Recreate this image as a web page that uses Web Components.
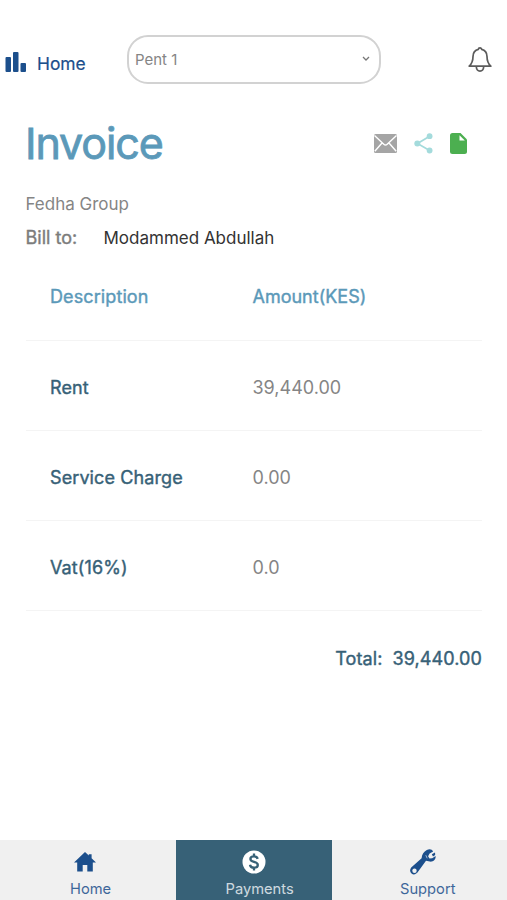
<!DOCTYPE html>
<html lang="en">
<head>
    <meta charset="UTF-8">
    <meta name="viewport" content="width=device-width, initial-scale=1.0">
    <title>Invoice</title>
    <style>
        :root {
            --Navy: #1c4f8c;
            --Blue: #5b99b9;
            --Teal: #376177;
            --Gray: #858585;
        }
        body {
            margin: 0;
            background: #fff;
            font-family: 'Inter', 'Liberation Sans', sans-serif;
        }
    </style>
</head>
<body>
    <invoice-app></invoice-app>

    <script>
        const icons = {
            bars: `<svg width="20" height="20" viewBox="0 0 20 20" fill="currentColor"><rect x="-.5" y="5" width="5.5" height="15" rx="1"/><rect x="7" y="0" width="5.5" height="20" rx="1"/><rect x="14.5" y="11" width="5.5" height="9" rx="1"/></svg>`,
            chevron: `<svg width="8" height="6" viewBox="0 0 8 6" fill="none" stroke="#777" stroke-width="1.3"><path d="M1 1l3 3 3-3"/></svg>`,
            bell: `<svg width="24" height="27" viewBox="0 0 24 27" fill="none" stroke="#5c5c5c" stroke-width="1.7" stroke-linejoin="round"><path d="M12 1.9C11 1.9 10.4 2.5 10.4 3.3C7 4.1 5 6.7 5 10.4C5 15.2 4 17.4 1.2 20.2H22.8C20 17.4 19 15.2 19 10.4C19 6.7 17 4.1 13.6 3.3C13.6 2.5 13 1.9 12 1.9Z"/><path d="M8.3 20.8C8.5 23.6 9.9 25.1 12 25.1S15.5 23.6 15.7 20.8"/></svg>`,
            mail: `<svg width="23" height="19" viewBox="0 0 23 19"><rect width="23" height="19" rx="1.5" fill="#a5a5a5"/><path d="M.5 1.5L9.8 10.2Q11.5 11.8 13.2 10.2L22.5 1.5M.8 17.2L8 9M22.2 17.2L15 9" fill="none" stroke="#fff" stroke-width="1.4"/></svg>`,
            share: `<svg width="19" height="21" viewBox="0 0 19 21" fill="#a4dbdc"><path d="M15.6 3.2L3.5 10.5L15.6 17.6" fill="none" stroke="#a4dbdc" stroke-width="1.7"/><circle cx="3.3" cy="10.5" r="3"/><circle cx="15.6" cy="3.2" r="2.9"/><circle cx="15.6" cy="17.5" r="2.9"/></svg>`,
            file: `<svg width="17" height="21" viewBox="0 0 17 21"><path d="M2.5 0H10.5L17 6.4V18.5Q17 21 14.5 21H2.5Q0 21 0 18.5V2.5Q0 0 2.5 0Z" fill="#4caf50"/><path d="M9.5 2.2V7.4H14.8Z" fill="#fff"/></svg>`,
            home: `<svg width="22" height="20" viewBox="0 0 22 20" fill="currentColor"><path d="M11 0L14.8 3.6V2.2H17.6V6.3L22 10.6H18.8V19.5H13.3V13H8.7V19.5H3.2V10.6H0Z"/></svg>`,
            dollar: `<svg width="24" height="24" viewBox="0 0 24 24" fill="none"><circle cx="12" cy="12" r="11.5" fill="#fff"/><path d="M15.7 8.9C15.2 7.3 13.9 6.4 12 6.4C9.8 6.4 8.4 7.4 8.4 9C8.4 10.7 9.7 11.3 12 11.9C14.6 12.6 15.8 13.3 15.8 15C15.8 16.7 14.2 17.7 12 17.7C9.8 17.7 8.3 16.7 8 14.8M12 3.6V6.6M12 17.5V20.5" stroke="#376177" stroke-width="2.3"/></svg>`,
            wrench: `<svg width="26" height="26" viewBox="0 0 26 26"><path d="M16.8 1C19.6-.4 22 .2 23.1 2.5L19.6 4.4L18.1 7.3L19.5 9.5L22.2 9.2L25.6 7.1C26 10.8 23.4 12.9 19.8 12.6L16 11.7L8.2 22.6C6.6 25.2 3.8 26.3 1.8 24.8C-.3 23.2-.4 20.7 1.2 18.6L11.6 9.2C11.9 5.4 13.8 2.5 16.8 1Z" fill="currentColor"/><path d="M21.8 5.2L25 3.6L25.2 6L23 7.5Z" fill="currentColor"/><circle cx="4.5" cy="21.8" r="2.2" fill="#f0f0f0"/><path d="M15.8 6.2L17.2 9.3" stroke="#9db3cf" stroke-width="1"/></svg>`
        };

        class AppIcon extends HTMLElement {
            constructor() {
                super();
                this.attachShadow({ mode: 'open' });
            }

            connectedCallback() {
                this.shadowRoot.innerHTML = `
                <style>
                    :host { display: block; flex: none; }
                    svg { display: block; overflow: visible; }
                </style>
                ${icons[this.getAttribute('name')]}
                `;
            }
        }

        class AppHeader extends HTMLElement {
            constructor() {
                super();
                this.attachShadow({ mode: 'open' });
            }

            connectedCallback() {
                this.shadowRoot.innerHTML = `
                <style>
                    :host {
                        display: grid;
                        grid-template-columns: 121px 254px 1fr;
                        box-sizing: border-box;
                        height: 84px;
                        padding: 35px 15px 0 6px;
                    }
                    .home {
                        display: flex;
                        align-items: center;
                        gap: 11px;
                        height: 52px;
                        padding-top: 1px;
                        color: var(--Navy);
                        font-size: 17.4px;
                        -webkit-text-stroke: .2px;
                    }
                    .home span { padding-top: 2px; }
                    .select {
                        display: flex;
                        align-items: center;
                        justify-content: space-between;
                        box-sizing: border-box;
                        height: 49px;
                        border: 2px solid #d2d2d2;
                        border-radius: 21px;
                        padding: 0 9px 1px 6px;
                        color: var(--Gray);
                        font-size: 15px;
                    }
                    app-icon[name="bell"] {
                        justify-self: end;
                        margin-top: 11px;
                    }
                </style>
                <div class="home"><app-icon name="bars"></app-icon><span>Home</span></div>
                <div class="select"><slot></slot><app-icon name="chevron"></app-icon></div>
                <app-icon name="bell"></app-icon>
                `;
            }
        }

        class InvoiceRow extends HTMLElement {
            constructor() {
                super();
                this.attachShadow({ mode: 'open' });
            }

            connectedCallback() {
                this.shadowRoot.innerHTML = `
                <style>
                    :host {
                        display: grid;
                        grid-template-columns: 202.5px 1fr;
                        align-items: center;
                        box-sizing: border-box;
                        height: 90px;
                        padding: 3px 0 0 24px;
                        border-bottom: 1px solid #f4f4f4;
                        font-size: 18px;
                        color: var(--Gray);
                    }
                    .label {
                        color: var(--Teal);
                        letter-spacing: .1px;
                        -webkit-text-stroke: .4px;
                    }
                    :host([head]) {
                        padding-top: 2px;
                        color: var(--Blue);
                        -webkit-text-stroke: .4px;
                    }
                    :host([head]) .label { color: var(--Blue); }
                </style>
                <span class="label">${this.getAttribute('label')}</span>
                <span><slot></slot></span>
                `;
            }
        }

        class NavItem extends HTMLElement {
            constructor() {
                super();
                this.attachShadow({ mode: 'open' });
            }

            connectedCallback() {
                this.shadowRoot.innerHTML = `
                <style>
                    :host {
                        display: flex;
                        flex-direction: column;
                        align-items: flex-start;
                        color: var(--Navy);
                        font-size: 14.7px;
                    }
                    :host([active]) {
                        background: var(--Teal);
                        color: #e9eff3;
                    }
                    .icon {
                        display: flex;
                        align-items: center;
                        height: 40px;
                        padding: 2px 0 0 var(--icon-indent);
                    }
                    .text {
                        line-height: 18px;
                        margin-top: -2px;
                        opacity: .85;
                    }
                </style>
                <div class="icon"><app-icon name="${this.getAttribute('icon')}"></app-icon></div>
                <span class="text"><slot></slot></span>
                `;
            }
        }

        class BottomNav extends HTMLElement {
            constructor() {
                super();
                this.attachShadow({ mode: 'open' });
            }

            connectedCallback() {
                this.shadowRoot.innerHTML = `
                <style>
                    :host {
                        display: grid;
                        grid-template-columns: 175.5px 156.5px 1fr;
                        height: 60.5px;
                        background: #f0f0f0;
                    }
                    nav-item[icon="home"] { padding-left: 70px; --icon-indent: 4px; }
                    nav-item[icon="dollar"] { padding-left: 50px; --icon-indent: 16px; }
                    nav-item[icon="wrench"] { padding-left: 68px; --icon-indent: 10px; }
                </style>
                <nav-item icon="home">Home</nav-item>
                <nav-item icon="dollar" active>Payments</nav-item>
                <nav-item icon="wrench">Support</nav-item>
                `;
            }
        }

        class InvoiceApp extends HTMLElement {
            constructor() {
                super();
                this.attachShadow({ mode: 'open' });
            }

            getTemplate() {
                const template = document.createElement('template');
                template.innerHTML = `
                ${this.getStyles()}
                <app-header>Pent 1</app-header>
                <main>
                    <div class="title">
                        <h1>Invoice</h1>
                        <div class="actions">
                            <app-icon name="mail"></app-icon>
                            <app-icon name="share"></app-icon>
                            <app-icon name="file"></app-icon>
                        </div>
                    </div>
                    <p class="company">Fedha Group</p>
                    <p class="bill"><span class="to">Bill to:</span><span class="name">Modammed Abdullah</span></p>
                    <invoice-row label="Description" head>Amount(KES)</invoice-row>
                    <invoice-row label="Rent">39,440.00</invoice-row>
                    <invoice-row label="Service Charge">0.00</invoice-row>
                    <invoice-row label="Vat(16%)">0.0</invoice-row>
                    <p class="total"><span>Total:</span><span class="sum">39,440.00</span></p>
                </main>
                <bottom-nav></bottom-nav>
                `;
                return template;
            }

            getStyles() {
                const styles = `
                <style>
                    :host {
                        display: flex;
                        flex-direction: column;
                        height: 900px;
                        overflow: hidden;
                    }
                    main {
                        flex: 1;
                        padding: 30px 25px 0 26px;
                    }
                    h1, p { margin: 0; }
                    .title {
                        display: flex;
                        justify-content: space-between;
                        align-items: center;
                        height: 60px;
                        padding-right: 15px;
                    }
                    h1 {
                        margin: -2px 0 0 -1px;
                        color: var(--Blue);
                        font-size: 43px;
                        font-weight: 400;
                        letter-spacing: -1.1px;
                        -webkit-text-stroke: .8px;
                    }
                    .actions {
                        display: flex;
                        align-items: center;
                        gap: 17px;
                        margin-top: -1px;
                    }
                    .company {
                        margin-top: 18px;
                        margin-left: -.5px;
                        color: var(--Gray);
                        font-size: 17px;
                        line-height: 24px;
                    }
                    .bill {
                        display: flex;
                        margin-top: 10px;
                        font-size: 17px;
                        line-height: 24px;
                    }
                    .to {
                        width: 78px;
                        margin-left: -.5px;
                        color: #7c7c7c;
                        font-size: 18px;
                        -webkit-text-stroke: .4px;
                    }
                    .name { color: #333; }
                    invoice-row[head] { margin-top: 1px; }
                    .total {
                        display: flex;
                        justify-content: flex-end;
                        gap: 10px;
                        margin-top: 36px;
                        line-height: 24px;
                        color: var(--Teal);
                        font-size: 18px;
                        letter-spacing: .1px;
                        -webkit-text-stroke: .4px;
                    }
                </style>
                `;
                return styles;
            }

            connectedCallback() {
                this.shadowRoot.appendChild(this.getTemplate().content.cloneNode(true));
            }
        }

        customElements.define('app-icon', AppIcon);
        customElements.define('app-header', AppHeader);
        customElements.define('invoice-row', InvoiceRow);
        customElements.define('nav-item', NavItem);
        customElements.define('bottom-nav', BottomNav);
        customElements.define('invoice-app', InvoiceApp);
    </script>
</body>
</html>
